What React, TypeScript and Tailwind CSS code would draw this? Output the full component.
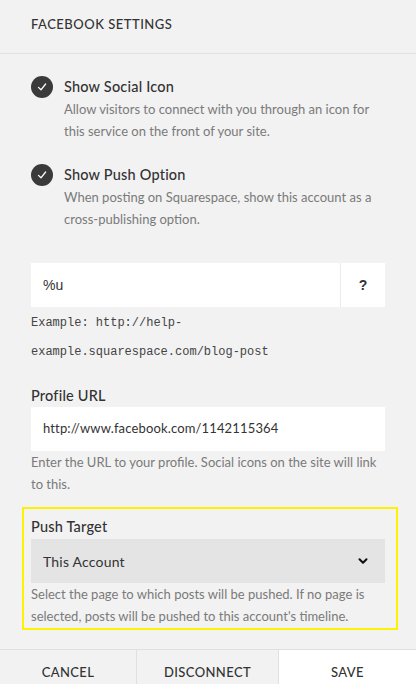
import { ChevronDown } from "lucide-react";

function CheckOption({ title, description }: { title: string; description: string }) {
  return (
    <div className="flex gap-[11px]">
      <span className="flex size-[22px] shrink-0 items-center justify-center rounded-full bg-[#3a3a3a]">
        <svg width="10" height="10" viewBox="0 0 10 10" fill="none" aria-hidden>
          <path d="M1.5 5.4 L4 7.8 L8.6 2" stroke="white" strokeWidth="1.3" strokeLinecap="round" strokeLinejoin="round" />
        </svg>
      </span>
      <div>
        <div className="text-[14.5px] font-medium leading-[22px] tracking-[0.2px] text-[#333]">{title}</div>
        <p className="text-[13px] leading-[22px] text-[#7a7a7a]">{description}</p>
      </div>
    </div>
  );
}

export default function App() {
  return (
    <div className="flex min-h-[684px] flex-col bg-[#f2f2f2] font-['Lato',sans-serif]">
      <header className="flex h-[54px] items-center border-b border-[#e2e2e2] px-[31px] pb-[3px]">
        <h1 className="text-[13px] font-medium uppercase tracking-[0.5px] text-[#333]">
          Facebook Settings
        </h1>
      </header>

      <main className="px-[31px] pt-[22px]">
        <div className="grid gap-[22px]">
          <CheckOption
            title="Show Social Icon"
            description="Allow visitors to connect with you through an icon for this service on the front of your site."
          />
          <CheckOption
            title="Show Push Option"
            description="When posting on Squarespace, show this account as a cross-publishing option."
          />
        </div>

        <div className="mt-[33px] flex h-[44px] bg-white font-['Liberation_Sans',sans-serif] text-[14px] text-[#333]">
          <span className="flex flex-1 items-center px-[12px]">%u</span>
          <span className="flex w-[45px] items-center justify-center border-l border-[#ececec] font-bold">?</span>
        </div>
        <p className="pt-[2px] font-['Liberation_Mono',monospace] text-[12px] leading-[29px] text-[#444]">
          Example: http://help-
          <br />
          example.squarespace.com/blog-post
        </p>

        <label className="mt-[18px] block text-[14.5px] font-medium leading-[22px] tracking-[0.2px] text-[#333]">
          Profile URL
        </label>
        <div className="flex h-[44px] items-center bg-white px-[12px] text-[13px] tracking-[0.15px] text-[#333]">
          http://www.facebook.com/1142115364
        </div>
        <p className="text-[13px] leading-[22px] text-[#7a7a7a]">
          Enter the URL to your profile. Social icons on the site will link to this.
        </p>

        <section className="mt-[12px] -ml-[9px] -mr-[13px] border-2 border-[#fff200] pt-[7px] pb-[1px] pl-[7px] pr-[11px]">
          <label className="block text-[14.5px] font-medium leading-[22px] tracking-[0.2px] text-[#333]">
            Push Target
          </label>
          <div className="mt-[1px] flex h-[44px] items-center justify-between bg-[#e4e4e4] pl-[12px] pr-[15px] text-[14px] tracking-[0.2px] text-[#333]">
            <span>This Account</span>
            <ChevronDown size={14} strokeWidth={3.5} className="text-[#111]" aria-hidden />
          </div>
          <p className="text-[13px] leading-[22px] text-[#7a7a7a]">
            Select the page to which posts will be pushed. If no page is selected, posts will be pushed to this account's timeline.
          </p>
        </section>
      </main>

      <footer className="mt-[19px] grid h-[47px] grid-cols-[137px_141px_1fr] border-t border-[#e0e0e0] text-[13px] font-medium uppercase tracking-[0.4px] text-[#333]">
        <button className="flex items-center justify-center border-r border-[#e0e0e0] uppercase">Cancel</button>
        <button className="flex items-center justify-center uppercase">Disconnect</button>
        <button className="flex items-center justify-center border-l border-[#e0e0e0] bg-white uppercase">Save</button>
      </footer>
    </div>
  );
}
